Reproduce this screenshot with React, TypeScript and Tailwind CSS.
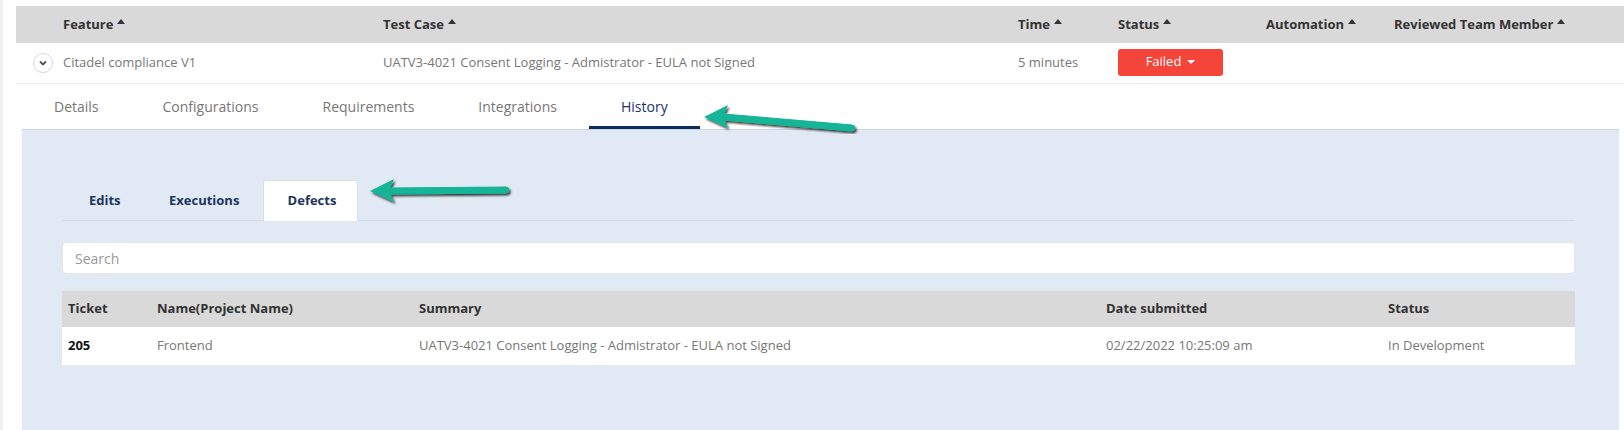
import React from "react";

const Caret = () => (
  <svg width="8" height="5" viewBox="0 0 8 5" className="ml-1 inline-block -translate-y-[3px]">
    <path d="M0 5 L4 0 L8 5 Z" fill="#333" />
  </svg>
);

const Arrow = ({ width, tilt }: { width: number; tilt: number }) => (
  <svg width={width + 12} height={34} viewBox={`0 0 ${width + 12} 34`}>
    <defs>
      <filter id={`sh${width}`} x="-10%" y="-30%" width="130%" height="180%">
        <feDropShadow dx="1.5" dy="2" stdDeviation="1.2" floodColor="#000" floodOpacity="0.75" />
      </filter>
    </defs>
    <g filter={`url(#sh${width})`}>
      <path
        d={`M22 ${14} L${width - 2} ${14 + tilt} L${width - 2} ${20 + tilt} L22 20 Z`}
        fill="#13b597"
        stroke="#13b597"
        strokeWidth="1"
        strokeLinejoin="round"
      />
      <circle cx={width - 2} cy={17 + tilt} r="3.2" fill="#13b597" />
      <path d="M2 17 L26 5 L21 17 L26 28 Z" fill="#13b597" strokeLinejoin="round" />
    </g>
  </svg>
);

const topCols = [
  { label: "Feature", w: "w-[320px]" },
  { label: "Test Case", w: "w-[635px]" },
  { label: "Time", w: "w-[100px]" },
  { label: "Status", w: "w-[148px]" },
  { label: "Automation", w: "w-[128px]" },
  { label: "Reviewed Team Member", w: "" },
];

const mainTabs = ["Details", "Configurations", "Requirements", "Integrations", "History"];

export default function App() {
  return (
    <div
      className="relative w-[1624px] h-[430px] overflow-hidden bg-white flex text-[13px]"
      style={{ fontFamily: '"Open Sans", "Liberation Sans", sans-serif' }}
    >
      <div className="w-[3px] bg-[#efefef] shrink-0" />
      <div className="flex-1 pl-[13px] pt-[6px] flex flex-col">
        {/* table header */}
        <div className="h-[37px] bg-[#d9d9d9] flex items-center pl-[47px] text-[#333] font-bold">
          {topCols.map((c) => (
            <div key={c.label} className={`${c.w} shrink-0 flex items-center`}>
              {c.label}
              <Caret />
            </div>
          ))}
        </div>

        {/* data row */}
        <div className="h-[41px] border-b border-[#ececec] flex items-center text-[#777]">
          <div className="w-[47px] shrink-0 flex justify-center pl-[6px]">
            <div className="w-[20px] h-[20px] rounded-full border border-[#d6d6d6] flex items-center justify-center">
              <svg width="8" height="6" viewBox="0 0 8 6">
                <path d="M1 1.5 L4 4.5 L7 1.5" stroke="#555" strokeWidth="1.8" fill="none" />
              </svg>
            </div>
          </div>
          <div className="w-[320px] shrink-0">Citadel compliance V1</div>
          <div className="w-[635px] shrink-0">UATV3-4021 Consent Logging - Admistrator - EULA not Signed</div>
          <div className="w-[100px] shrink-0">5 minutes</div>
          <div className="w-[148px] shrink-0">
            <div className="w-[105px] h-[27px] -mt-[2px] rounded-[3px] bg-[#f5443a] text-white flex items-center justify-center gap-[6px]">
              Failed
              <svg width="8" height="4" viewBox="0 0 8 4">
                <path d="M0 0 L8 0 L4 4 Z" fill="#fff" />
              </svg>
            </div>
          </div>
        </div>

        {/* main tabs */}
        <div className="ml-[6px] mr-[5px] flex flex-col flex-1">
          <div className="h-[46px] flex items-stretch text-[#777] text-[14px] border-b border-[#c9d7e8]">
            {mainTabs.map((t) => (
              <div
                key={t}
                className={`px-[32px] flex items-center ${
                  t === "History"
                    ? "text-[#1d2f6f] border-b-[3px] border-[#0d2d5c] pt-[3px]"
                    : ""
                }`}
              >
                {t}
              </div>
            ))}
          </div>

          {/* panel */}
          <div className="flex-1 bg-[#e0e9f4] pl-[40px] pr-[44px] pt-[51px]">
            <div className="flex items-end h-[40px] border-b border-[#d3dce6] text-[13px] font-bold text-[#1c3660]">
              <div className="w-[79px] pl-[27px] h-full flex items-center">Edits</div>
              <div className="w-[122px] pl-[28px] h-full flex items-center">Executions</div>
              <div className="w-[95px] h-[41px] -mb-px bg-white border border-b-0 border-[#d9dfe6] rounded-t-[3px] flex items-center justify-center pl-[3px]">
                Defects
              </div>
            </div>

            <div className="mt-[21px] h-[32px] bg-white rounded-[4px] border border-[#e3e7ec] flex items-center pl-[12px] text-[14px] text-[#999]">
              Search
            </div>

            <div className="mt-[17px] h-[36px] bg-[#d9d9d9] flex items-center pl-[6px] font-bold text-[#333]">
              <div className="w-[89px]">Ticket</div>
              <div className="w-[262px]">Name(Project Name)</div>
              <div className="w-[687px]">Summary</div>
              <div className="w-[282px]">Date submitted</div>
              <div>Status</div>
            </div>
            <div className="h-[39px] bg-white border-b border-[#e6eaef] flex items-center pl-[6px] text-[#777]">
              <div className="w-[89px] font-bold text-[#111]">205</div>
              <div className="w-[262px]">Frontend</div>
              <div className="w-[687px]">UATV3-4021 Consent Logging - Admistrator - EULA not Signed</div>
              <div className="w-[282px]">02/22/2022 10:25:09 am</div>
              <div>In Development</div>
            </div>
          </div>
        </div>
      </div>

      {/* annotation arrows */}
      <div className="absolute left-[702px] top-[100px]">
        <Arrow width={152} tilt={11} />
      </div>
      <div className="absolute left-[368px] top-[174px]">
        <Arrow width={140} tilt={-1} />
      </div>
    </div>
  );
}
